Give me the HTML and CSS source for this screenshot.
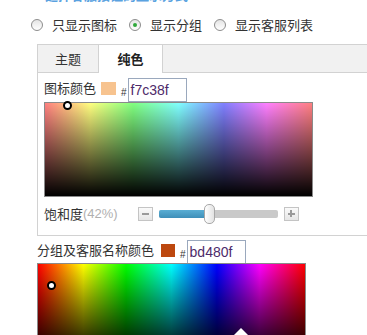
FILE: index.html
```html
<!DOCTYPE html>
<html lang="zh">
<head>
<meta charset="utf-8">
<link rel="stylesheet" href="styles.css">
</head>
<body>
<div class="page">
  <div class="heading">选择客服按钮的显示方式</div>
  <div class="radios">
    <span class="radio"></span><span class="rlabel">只显示图标</span>
    <span class="radio checked"></span><span class="rlabel">显示分组</span>
    <span class="radio"></span><span class="rlabel">显示客服列表</span>
  </div>
  <div class="panel">
    <div class="tabs">
      <div class="tab">主题</div>
      <div class="tab active">纯色</div>
    </div>
    <div class="content">
      <div class="colorrow">
        <span class="clabel">图标颜色</span>
        <span class="swatch sw1"></span>
        <span class="hash">#</span>
        <span class="hex">f7c38f</span>
      </div>
      <div class="picker pastel">
        <span class="dot dot1"></span>
      </div>
      <div class="satrow">
        <span class="slabel">饱和度</span><span class="pct">(42%)</span>
        <span class="btn minus"></span>
        <span class="track"><span class="fill"></span><span class="knob"></span></span>
        <span class="btn plus"></span>
      </div>
    </div>
  </div>
  <div class="colorrow row2">
    <span class="clabel">分组及客服名称颜色</span>
    <span class="swatch sw2"></span>
    <span class="hash">#</span>
    <span class="hex">bd480f</span>
  </div>
  <div class="picker vivid">
    <span class="dot dot2"></span>
    <span class="pointer"></span>
  </div>
</div>
</body>
</html>
```
FILE: styles.css
```css
html, body {
  margin: 0;
  padding: 0;
  background: #fff;
  overflow: hidden;
}
body {
  width: 367px;
  height: 335px;
  font-family: "Noto Sans CJK SC", "Liberation Sans", sans-serif;
  font-size: 13px;
  color: #333;
}
.page {
  width: 367px;
  padding-top: 1px;
}
.heading {
  margin-top: -14px;
  padding-left: 45px;
  height: 16px;
  line-height: 16px;
  font-weight: bold;
  color: #5aa2e0;
  white-space: nowrap;
}
.radios {
  display: flex;
  align-items: center;
  height: 16px;
  margin-top: 14px;
  padding-left: 31px;
}
.radio {
  width: 10px;
  height: 10px;
  border: 1px solid #8d8d8d;
  border-radius: 50%;
  background: linear-gradient(#e4e4e4, #ffffff);
  margin-right: 9px;
  position: relative;
  flex: none;
}
.radio.checked::after {
  content: "";
  position: absolute;
  left: 3px;
  top: 3px;
  width: 4px;
  height: 4px;
  border-radius: 50%;
  background: #2fa83a;
}
.rlabel {
  line-height: 16px;
  margin-right: 12px;
  white-space: nowrap;
}
.panel {
  margin-top: 11px;
  margin-left: 37px;
  width: 420px;
  border: 1px solid #d2d2d2;
  border-right: none;
}
.tabs {
  display: flex;
  height: 27px;
  background: #f1f1f1;
  border-bottom: 1px solid #d2d2d2;
}
.tab {
  height: 27px;
  line-height: 27px;
  text-align: center;
  width: 60px;
  color: #333;
}
.tab.active {
  width: 63px;
  background: #fff;
  font-weight: bold;
  border-left: 1px solid #d2d2d2;
  border-right: 1px solid #d2d2d2;
  height: 28px;
  color: #222;
}
.content {
  padding: 5px 0 12px 6px;
}
.colorrow {
  display: flex;
  align-items: flex-start;
  height: 24px;
}
.clabel {
  margin-top: 2px;
  line-height: 16px;
  white-space: nowrap;
}
.swatch {
  margin-top: 4px;
  margin-left: 5px;
  width: 15px;
  height: 13px;
  flex: none;
}
.sw1 { background: #f7c38f; }
.sw2 { background: #bd480f; }
.hash {
  font-family: "Liberation Sans", sans-serif;
  font-size: 10px;
  line-height: 10px;
  margin-top: 10px;
  margin-left: 5px;
  margin-right: 1px;
  color: #333;
}
.hex {
  width: 55px;
  height: 22px;
  border: 1px solid #9aa8bd;
  font-family: "Liberation Sans", sans-serif;
  font-size: 14px;
  line-height: 22px;
  padding-left: 2px;
  box-sizing: content-box;
  color: #4e2b6a;
  background: #fff;
}
.picker {
  position: relative;
  width: 267px;
  height: 93px;
  border: 1px solid #8a8a8a;
}
.pastel {
  background:
    linear-gradient(to bottom, rgba(0,0,0,0), #000),
    linear-gradient(rgba(255,255,255,0.5), rgba(255,255,255,0.5)),
    linear-gradient(to right, #ff0000, #ffff00 17%, #00ff00 33%, #00ffff 50%, #0000ff 67%, #ff00ff 83%, #ff0000);
}
.vivid {
  margin-left: 37px;
  margin-top: -1px;
  background:
    linear-gradient(to bottom, rgba(0,0,0,0), #000),
    linear-gradient(to right, #ff0000, #ffff00 17%, #00ff00 33%, #00ffff 50%, #0000ff 67%, #ff00ff 83%, #ff0000);
}
.dot {
  position: absolute;
  width: 5px;
  height: 5px;
  border: 2px solid #000;
  border-radius: 50%;
  background: #fff;
}
.dot1 { left: 18px; top: -2px; }
.dot2 { left: 9px; top: 17px; }
.pointer {
  position: absolute;
  left: 194px;
  top: 64px;
  width: 0;
  height: 0;
  border-left: 9px solid transparent;
  border-right: 9px solid transparent;
  border-bottom: 9px solid #fff;
}
.satrow {
  display: flex;
  align-items: center;
  height: 19px;
  margin-top: 7px;
}
.slabel {
  line-height: 16px;
}
.pct {
  font-family: "Liberation Sans", sans-serif;
  color: #b0b0b0;
  font-size: 13px;
}
.btn {
  width: 13px;
  height: 12px;
  border: 1px solid #c4c4c4;
  background: linear-gradient(#fafafa, #e6e6e6);
  position: relative;
  flex: none;
}
.minus { margin-left: 20px; }
.plus { margin-left: 6px; }
.btn::before {
  content: "";
  position: absolute;
  left: 3px;
  top: 5px;
  width: 7px;
  height: 2px;
  background: #9a9a9a;
}
.plus::after {
  content: "";
  position: absolute;
  left: 5.5px;
  top: 2.5px;
  width: 2px;
  height: 7px;
  background: #9a9a9a;
}
.track {
  position: relative;
  margin-left: 6px;
  width: 119px;
  height: 8px;
  border-radius: 2px;
  background: #c9c9c9;
  flex: none;
}
.fill {
  display: block;
  width: 48px;
  height: 8px;
  border-radius: 2px 0 0 2px;
  background: linear-gradient(#5aaed4, #3e8fb9);
}
.knob {
  position: absolute;
  left: 45px;
  top: -6px;
  width: 9px;
  height: 18px;
  border: 1px solid #a8a8a8;
  border-radius: 5px;
  background: linear-gradient(to right, #ffffff, #e2e2e2);
}
.row2 {
  margin-top: 4px;
  margin-left: 37px;
}
.row2 .swatch { margin-left: 7px; width: 14px; }
```
